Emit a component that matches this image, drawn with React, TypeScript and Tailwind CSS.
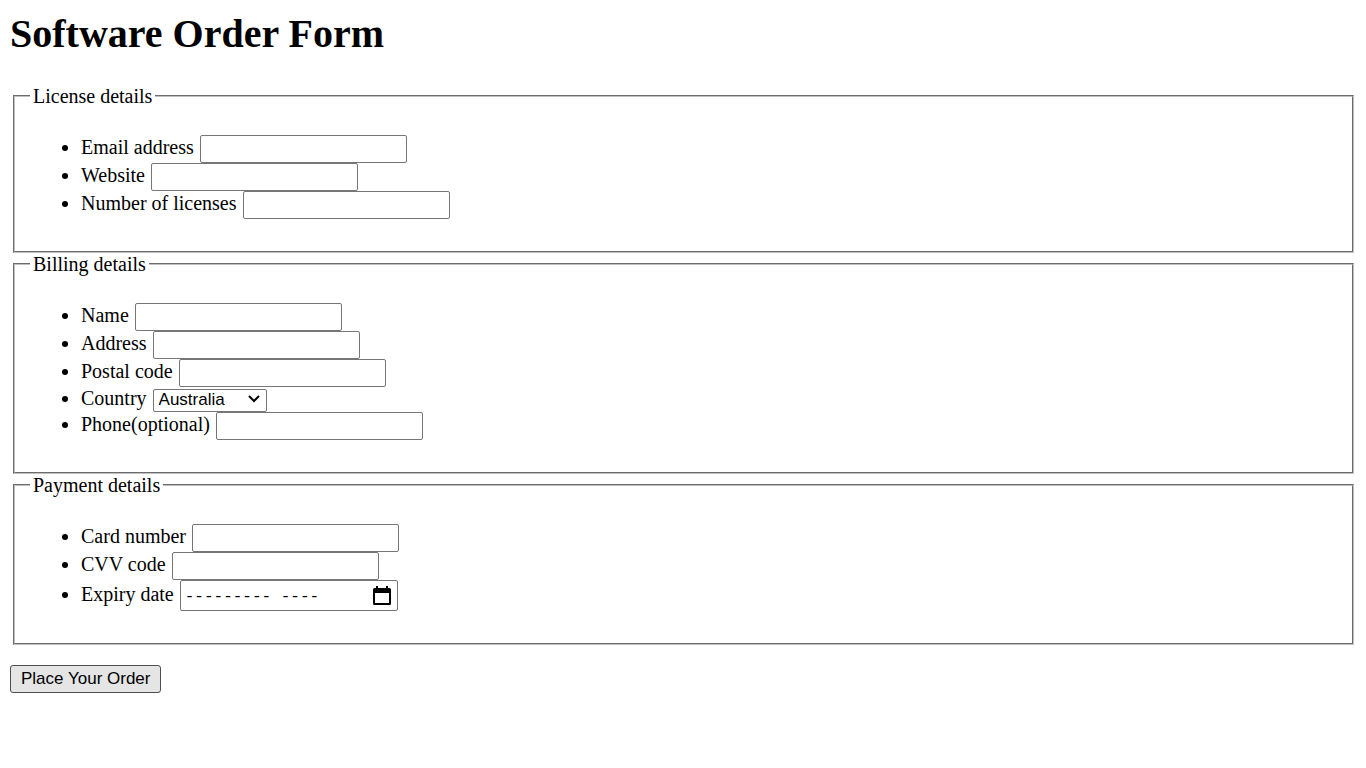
import type { ReactNode } from "react";

const controlBorder = "ml-px border border-[#767676] rounded-[2px] bg-white";

function Section({ title, children }: { title: string; children: ReactNode }) {
  return (
    <fieldset className="ml-[3px] mr-[2px] border-2 border-[#c0c0c0] px-[15px] pt-2 pb-3 [border-style:groove]">
      <legend className="px-[3px] leading-[22px]">{title}</legend>
      <ul className="my-5 list-disc pl-[51px]">{children}</ul>
    </fieldset>
  );
}

function TextRow({ id, label, type = "text" }: { id: string; label: string; type?: string }) {
  return (
    <li>
      <label htmlFor={id}>{label}</label>{" "}
      <input
        id={id}
        name={id}
        type={type}
        className={`${controlBorder} h-7 w-[207px] px-[3px] font-['Liberation_Sans',sans-serif] text-[17px]`}
      />
    </li>
  );
}

export default function App() {
  return (
    <main className="px-[10px] pt-[10px] pb-[10px] font-['Liberation_Serif',serif] text-[20px] leading-[23px] text-black">
      <h1 className="mb-[28px] text-[40px] leading-[47px] font-bold">Software Order Form</h1>
      <form>
        <Section title="License details">
          <TextRow id="email" label="Email address" type="email" />
          <TextRow id="website" label="Website" type="url" />
          <TextRow id="licenses" label="Number of licenses" />
        </Section>
        <Section title="Billing details">
          <TextRow id="name" label="Name" />
          <TextRow id="address" label="Address" />
          <TextRow id="postal" label="Postal code" />
          <li>
            <label htmlFor="country">Country</label>{" "}
            <span className="relative inline-block">
              <select
                id="country"
                name="country"
                className={`${controlBorder} h-[23px] w-[114px] appearance-none pl-[5px] font-['Liberation_Sans',sans-serif] text-[17px] leading-5`}
              >
                <option>Australia</option>
                <option>Canada</option>
                <option>New Zealand</option>
              </select>
              <svg
                viewBox="0 0 12 8"
                className="pointer-events-none absolute top-2 right-[7px] h-2 w-3"
                fill="none"
                stroke="black"
                strokeWidth="2"
                aria-hidden="true"
              >
                <path d="M1 1l5 5 5-5" />
              </svg>
            </span>
          </li>
          <TextRow id="phone" label="Phone(optional)" type="tel" />
        </Section>
        <Section title="Payment details">
          <TextRow id="card" label="Card number" />
          <TextRow id="cvv" label="CVV code" />
          <li>
            <label htmlFor="expiry">Expiry date</label>{" "}
            <span className="relative inline-block">
              <input
                id="expiry"
                name="expiry"
                type="text"
                defaultValue="--------- ----"
                className={`${controlBorder} h-[31px] w-[218px] px-[4px] pt-[3px] font-['Liberation_Mono',monospace] text-[16px]`}
              />
              <button type="button" aria-label="Choose month" className="absolute top-[6px] right-[7px]">
                <svg viewBox="0 0 18 19" className="block h-[19px] w-[18px]" aria-hidden="true">
                  <path
                    fillRule="evenodd"
                    d="M3 0h2v2h8V0h2v2h1.500a1.500 1.500 0 0 1 1.500 1.500v14a1.500 1.500 0 0 1-1.500 1.500h-15A1.500 1.500 0 0 1 0 17.500v-14A1.500 1.500 0 0 1 1.500 2H3zM2 7V17h14V7z"
                  />
                </svg>
              </button>
            </span>
          </li>
        </Section>
        <button
          type="submit"
          className="mt-5 h-7 rounded-[3px] border border-[#4f4f4f] bg-[#e5e5e5] px-[10px] font-['Liberation_Sans',sans-serif] text-[17px] leading-5"
        >
          Place Your Order
        </button>
      </form>
    </main>
  );
}
